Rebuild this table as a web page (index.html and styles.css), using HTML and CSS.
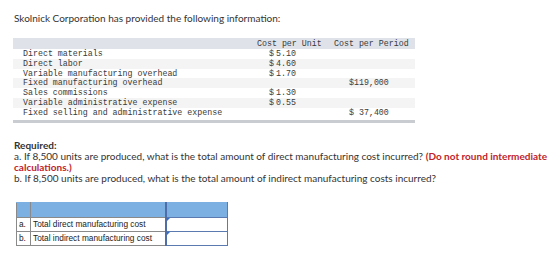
FILE: index.html
```html
<!DOCTYPE html>
<html>
<head>
<meta charset="utf-8">
<link rel="stylesheet" href="styles.css">
</head>
<body>
<p class="intro">Skolnick Corporation has provided the following information:</p>
<table class="data">
  <thead>
    <tr><th class="label"></th><th class="unit">Cost per Unit</th><th class="period">Cost per Period</th></tr>
  </thead>
  <tbody>
    <tr><td class="label">Direct materials</td><td class="unit">$<span class="gap"></span>5.10</td><td class="period"></td></tr>
    <tr><td class="label">Direct labor</td><td class="unit">$<span class="gap"></span>4.60</td><td class="period"></td></tr>
    <tr><td class="label">Variable manufacturing overhead</td><td class="unit">$<span class="gap"></span>1.70</td><td class="period"></td></tr>
    <tr><td class="label">Fixed manufacturing overhead</td><td class="unit"></td><td class="period">$119,000</td></tr>
    <tr><td class="label">Sales commissions</td><td class="unit">$<span class="gap"></span>1.30</td><td class="period"></td></tr>
    <tr><td class="label">Variable administrative expense</td><td class="unit">$<span class="gap"></span>0.55</td><td class="period"></td></tr>
    <tr><td class="label">Fixed selling and administrative expense</td><td class="unit"></td><td class="period">$ 37,400</td></tr>
  </tbody>
  <tfoot>
    <tr class="spacer"><td colspan="3"></td></tr>
  </tfoot>
</table>
<div class="required">
  <p class="req-title">Required:</p>
  <p>a. If 8,500 units are produced, what is the total amount of direct manufacturing cost incurred? <strong class="note">(Do not round intermediate</strong><br><strong class="note">calculations.)</strong></p>
  <p>b. If 8,500 units are produced, what is the total amount of indirect manufacturing costs incurred?</p>
</div>
<table class="answer">
  <tr class="head"><td class="letter"></td><td class="desc"></td><td class="input"></td></tr>
  <tr><td class="letter">a.</td><td class="desc">Total direct manufacturing cost</td><td class="input"><span class="flag"></span></td></tr>
  <tr><td class="letter">b.</td><td class="desc">Total indirect manufacturing cost</td><td class="input"><span class="flag"></span></td></tr>
</table>
</body>
</html>
```
FILE: styles.css
```css
body {
  margin: 0;
  padding: 12px 0 0 14px;
  font-family: Lato, "Open Sans", Arial, sans-serif;
  font-size: 10px;
  color: #333;
  background: #fff;
}
.intro {
  margin: 0 0 13px 0;
  line-height: 13px;
}
.data {
  border-collapse: collapse;
  width: 402px;
  margin-left: -1px;
  font-family: "Liberation Mono", "Courier New", monospace;
  font-size: 8.3px;
  color: #3a3a3a;
  border-bottom: 3px solid #c9cdd2;
}
.data th {
  background: #dfe3e9;
  font-weight: normal;
  height: 11px;
  line-height: 11px;
  padding: 0;
  text-align: left;
}
.data td {
  height: 9.83px;
  line-height: 9.83px;
  padding: 0;
  white-space: pre;
}
.data tbody tr:nth-child(even) td {
  background: #f4f4f4;
}
.data tr.spacer td {
  height: 2px;
  line-height: 2px;
  background: #fff;
}
.data .label { padding-left: 10px; width: 234px; }
.data .unit { width: 77px; }
.data td.unit { padding-left: 12px; box-sizing: border-box; }
.data td.period { padding-left: 15px; }
.gap { display: inline-block; width: 2px; }
.required {
  margin-top: 17px;
  width: 548px;
}
.required p {
  margin: 0;
  line-height: 11px;
}
.req-title { font-weight: bold; }
.note { color: #c0232b; font-weight: bold; }
.answer {
  margin-top: 18px;
  margin-left: 2px;
  border-collapse: collapse;
  font-family: "Liberation Sans", Arial, sans-serif;
  font-size: 8.3px;
  color: #222;
}
.answer td {
  border: 1px solid #8a8a8a;
  height: 13px;
  padding: 0 3px 0 2px;
  white-space: nowrap;
}
.answer .head td {
  background: #7cb0e3;
  border-top-color: #7cb0e3;
  height: 14px;
}
.answer .letter { width: 8px; }
.answer .desc { width: 129px; }
.answer td.input {
  width: 60px;
  position: relative;
  border: 1px solid #5b7bb0;
  border-left: 2px solid #4d6ea8;
  padding: 0;
}
.answer .head td.input {
  border-color: #7cb0e3 #5b7bb0 #5b7bb0 #4d6ea8;
}
.flag {
  position: absolute;
  left: 0;
  top: 0;
  width: 0;
  height: 0;
  border-top: 3px solid #2f6fd6;
  border-right: 3px solid transparent;
}
```
